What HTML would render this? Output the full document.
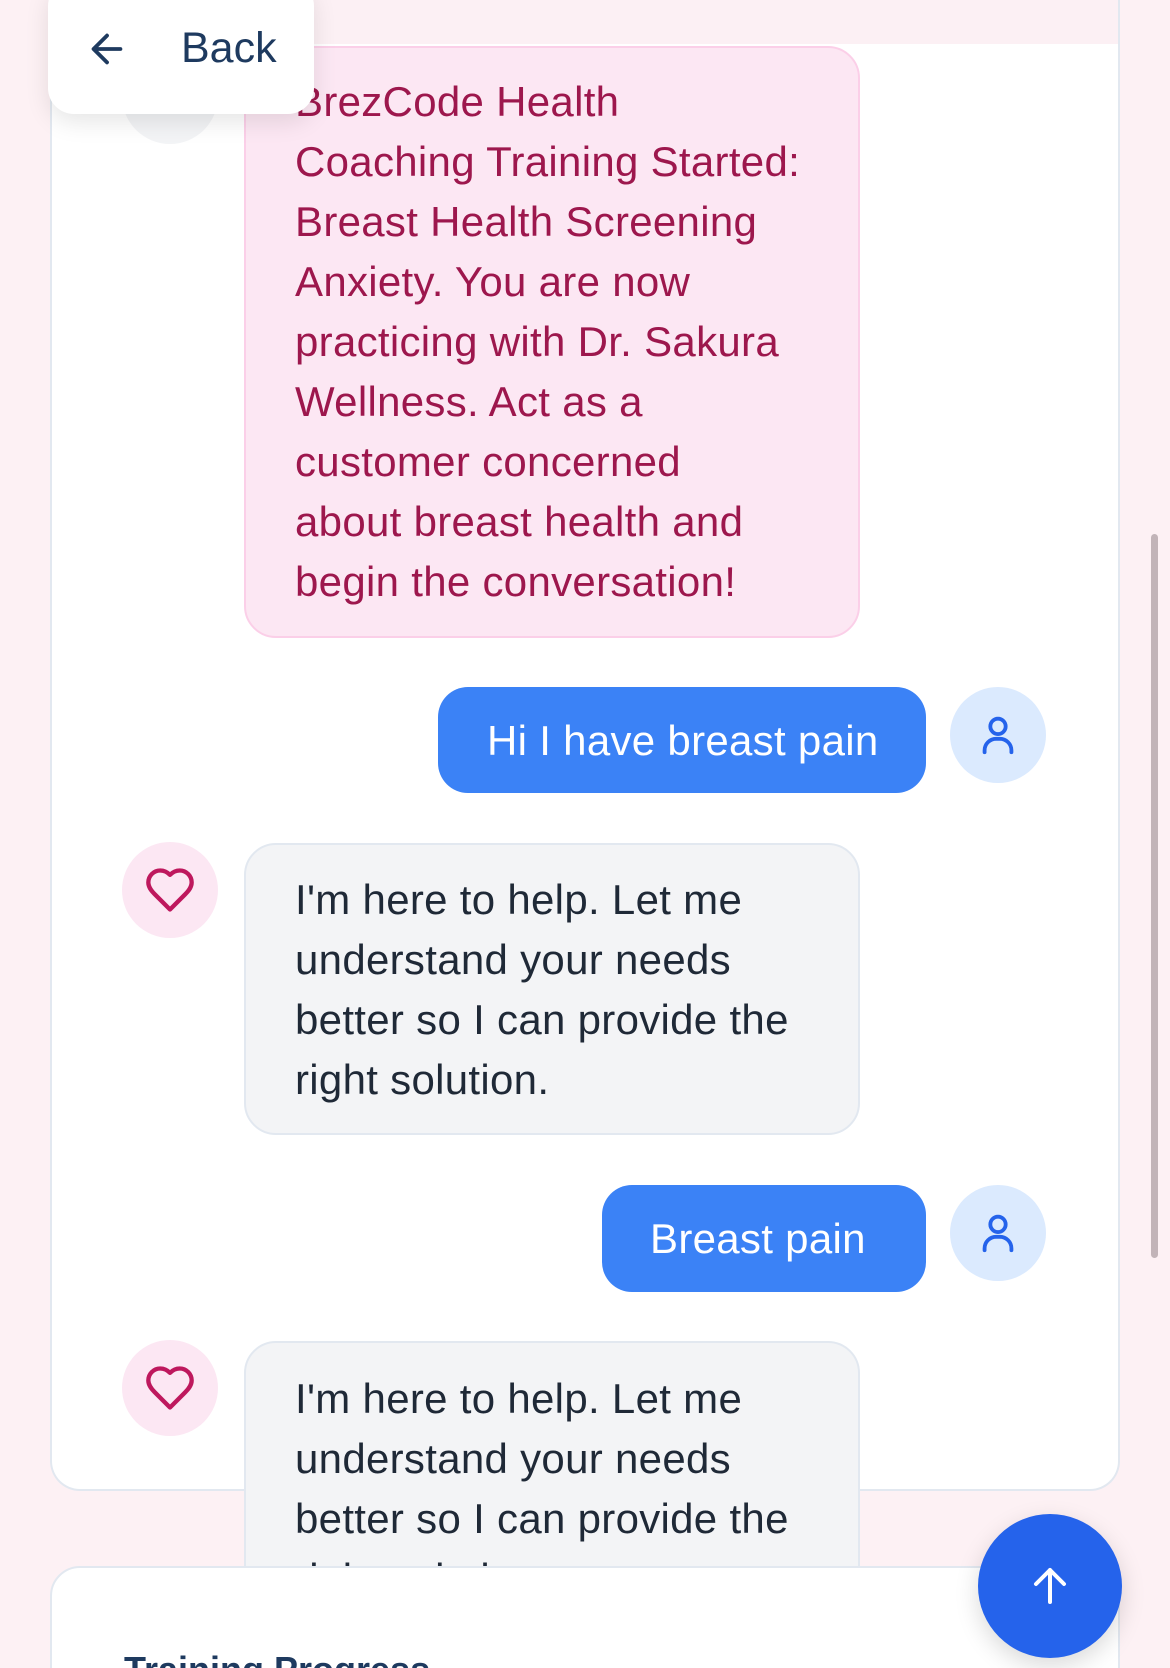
<!DOCTYPE html>
<html><head><meta charset="utf-8"><style>
*{margin:0;padding:0;box-sizing:border-box}
html,body{width:1170px;height:1668px;overflow:hidden}
body{background:#fdf1f4;font-family:"Liberation Sans",sans-serif}
#w{position:relative;width:1170px;height:1668px;overflow:hidden}
.abs{position:absolute}
.card{left:50px;width:1070px;background:#fff;border:2px solid #e2e8f0;border-radius:30px}
.t{font-size:42px;line-height:60px;white-space:nowrap;letter-spacing:0.3px}
.av{border-radius:50%;width:96px;height:96px;display:flex;align-items:center;justify-content:center}
</style></head><body><div id="w">
<div class="abs" style="left:50px;top:-40px;width:1070px;height:85px;background:#fcf0f4;border-right:2px solid #e2e8f0"></div>
<div class="abs card" style="top:44px;height:1447px;border-top:none;border-radius:0 0 30px 30px"></div>
<div class="abs av" style="left:122px;top:48px;background:#f3f4f6"></div>
<div class="abs" style="left:244px;top:46px;width:616px;height:592px;background:#fce7f3;border:2px solid #fbcfe8;border-radius:32px"></div>
<div class="abs t" style="left:295px;top:72px;color:#9d174d">BrezCode Health<br>Coaching Training Started:<br>Breast Health Screening<br>Anxiety. You are now<br>practicing with Dr. Sakura<br>Wellness. Act as a<br>customer concerned<br>about breast health and<br>begin the conversation!</div>

<div class="abs" style="left:438px;top:687px;width:488px;height:106px;background:#3b82f6;border-radius:30px"></div>
<div class="abs t" style="left:487px;top:711px;color:#fff">Hi I have breast pain</div>
<div class="abs av" style="left:950px;top:687px;background:#dbeafe"><svg width="46" height="46" viewBox="0 0 24 24" fill="none" stroke="#2563eb" stroke-width="2" stroke-linecap="round"><circle cx="12" cy="7.5" r="4"/><path d="M5 21v-1a6 6 0 0 1 6-6h2a6 6 0 0 1 6 6v1"/></svg></div>

<div class="abs av" style="left:122px;top:842px;background:#fce7f3"><svg width="52" height="52" viewBox="0 0 24 24" fill="none" stroke="#be185d" stroke-width="2" stroke-linejoin="round"><path d="M19 14c1.5-1.5 3-3.2 3-5.5A5.5 5.5 0 0 0 16.5 3c-1.8 0-3 .5-4.5 2-1.5-1.5-2.7-2-4.5-2A5.5 5.5 0 0 0 2 8.5c0 2.3 1.5 4 3 5.5l7 7z"/></svg></div>
<div class="abs" style="left:244px;top:843px;width:616px;height:292px;background:#f3f4f6;border:2px solid #e2e8f0;border-radius:32px"></div>
<div class="abs t" style="left:295px;top:870px;color:#1f2937">I'm here to help. Let me<br>understand your needs<br>better so I can provide the<br>right solution.</div>

<div class="abs" style="left:602px;top:1185px;width:324px;height:107px;background:#3b82f6;border-radius:30px"></div>
<div class="abs t" style="left:650px;top:1209px;color:#fff">Breast pain</div>
<div class="abs av" style="left:950px;top:1185px;background:#dbeafe"><svg width="46" height="46" viewBox="0 0 24 24" fill="none" stroke="#2563eb" stroke-width="2" stroke-linecap="round"><circle cx="12" cy="7.5" r="4"/><path d="M5 21v-1a6 6 0 0 1 6-6h2a6 6 0 0 1 6 6v1"/></svg></div>

<div class="abs av" style="left:122px;top:1340px;background:#fce7f3"><svg width="52" height="52" viewBox="0 0 24 24" fill="none" stroke="#be185d" stroke-width="2" stroke-linejoin="round"><path d="M19 14c1.5-1.5 3-3.2 3-5.5A5.5 5.5 0 0 0 16.5 3c-1.8 0-3 .5-4.5 2-1.5-1.5-2.7-2-4.5-2A5.5 5.5 0 0 0 2 8.5c0 2.3 1.5 4 3 5.5l7 7z"/></svg></div>
<div class="abs" style="left:244px;top:1341px;width:616px;height:300px;background:#f3f4f6;border:2px solid #e2e8f0;border-radius:32px"></div>
<div class="abs t" style="left:295px;top:1369px;color:#1f2937">I'm here to help. Let me<br>understand your needs<br>better so I can provide the<br>right solution.</div>

<div class="abs card" style="top:1566px;height:200px"></div>
<div class="abs" style="left:124px;top:1650px;font-size:36px;line-height:40px;font-weight:bold;color:#1e3a5f">Training Progress</div>

<div class="abs" style="left:1151px;top:534px;width:7px;height:724px;background:#c2b4b8;border-radius:4px"></div>

<div class="abs" style="left:48px;top:-20px;width:266px;height:134px;background:#fff;border-radius:26px;box-shadow:0 8px 24px rgba(0,0,0,.1)"></div>
<svg class="abs" style="left:84px;top:26px" width="46" height="46" viewBox="0 0 24 24" fill="none" stroke="#1e3a5f" stroke-width="2" stroke-linecap="round" stroke-linejoin="round"><path d="M19 12H5M12 19l-7-7 7-7"/></svg>
<div class="abs" style="left:181px;top:24px;font-size:43px;line-height:48px;color:#1e3a5f">Back</div>

<div class="abs av" style="left:978px;top:1514px;width:144px;height:144px;background:#2563eb;box-shadow:0 8px 24px rgba(0,0,0,.15)"><svg width="48" height="48" viewBox="0 0 24 24" fill="none" stroke="#fff" stroke-width="2" stroke-linecap="round" stroke-linejoin="round"><path d="M12 20V4M5 11l7-7 7 7"/></svg></div>
</div></body></html>
